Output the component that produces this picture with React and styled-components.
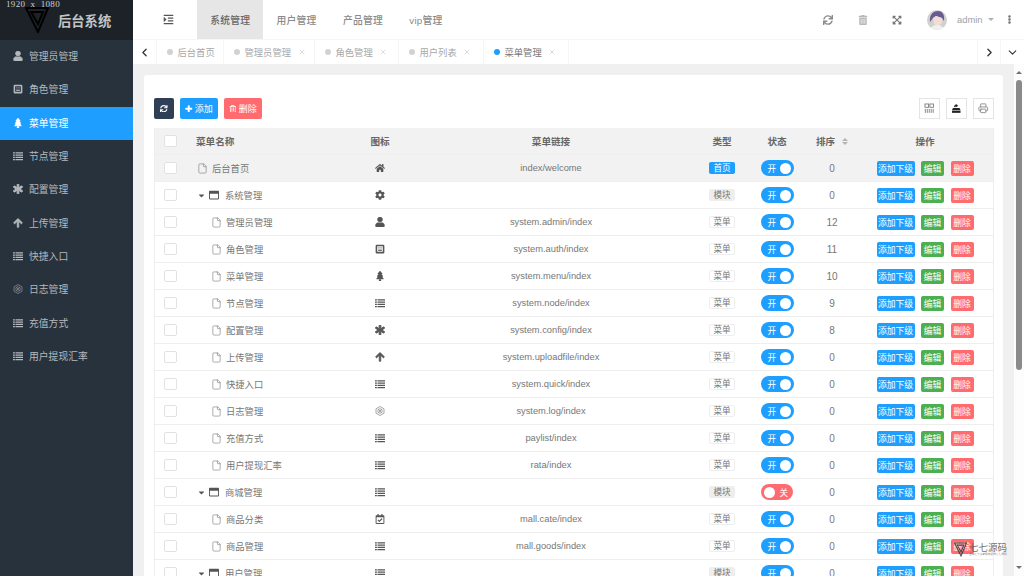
import React from 'react';
import styled, { createGlobalStyle } from 'styled-components';
import {
  FaUser, FaTree, FaAsterisk, FaArrowUp, FaHome, FaCog, FaSync, FaPlus, FaRegTrashAlt,
  FaTrashAlt, FaExpandArrowsAlt, FaRegWindowMaximize, FaCaretDown, FaRegCalendarCheck,
  FaEllipsisV, FaIndent,
} from 'react-icons/fa';
import { Printer, File, X, ChevronLeft, ChevronRight, ChevronDown } from 'lucide-react';

const FONT = '"Liberation Sans", "Noto Sans CJK SC", sans-serif';
const COLS = '31px 169px 50px 292px 50px 60px 50px 136px';

const Global = createGlobalStyle`
  html, body { margin: 0; padding: 0; height: 100%; overflow: hidden; background: #f0f0f0; }
  #root { height: 100%; }
  * { box-sizing: border-box; }
  body { font-family: ${FONT}; }
`;

const Shell = styled.div`
  display: grid;
  grid-template-columns: 133px 1fr;
  height: 100vh;
  overflow: hidden;
  position: relative;
`;

const Side = styled.aside`
  background: #28323d;
  display: flex;
  flex-direction: column;
`;

const Brand = styled.div`
  position: relative;
  height: 40px;
  background: #1c2228;
  display: flex;
  align-items: center;
  padding-left: 25px;
  gap: 9px;
  flex: none;
`;

const BrandTitle = styled.span`
  color: #c4c4c4;
  font-size: 13.3px;
  font-weight: 700;
`;

const Resolution = styled.span`
  position: absolute;
  left: 6px;
  top: -1px;
  font: 9px "Liberation Serif", serif;
  color: #cfcfcf;
  white-space: pre;
  line-height: 10px;
  letter-spacing: 0.35px;
`;

const NavItem = styled.div`
  height: 33.33px;
  display: flex;
  align-items: center;
  padding: 0 0 1px 13px;
  gap: 6px;
  flex: none;
  font-size: 9.8px;
  color: ${p => (p.$active ? '#fff' : '#b4b8bc')};
  background: ${p => (p.$active ? '#1e9fff' : 'transparent')};
  svg { width: 10px; height: 10px; flex: none; }
`;

const Main = styled.main`
  display: flex;
  flex-direction: column;
  min-width: 0;
  overflow: hidden;
`;

const Top = styled.header`
  height: 40px;
  background: #fff;
  border-bottom: 1px solid #f6f6f6;
  display: flex;
  align-items: stretch;
  flex: none;
`;

const Collapse = styled.div`
  width: 64px;
  padding-left: 6px;
  display: flex;
  align-items: center;
  justify-content: center;
  color: #555;
  svg { width: 11px; height: 11px; }
`;

const TopLink = styled.div`
  padding: 0 13.2px;
  display: flex;
  align-items: center;
  justify-content: center;
  font-size: 9.8px;
  font-weight: 500;
  letter-spacing: 0.2px;
  color: ${p => (p.$active ? '#666' : '#8a8a8a')};
  background: ${p => (p.$active ? '#e6e6e6' : 'transparent')};
`;

const TopRight = styled.div`
  margin-left: auto;
  display: flex;
  align-items: center;
  padding-right: 10.5px;
`;

const TopIcon = styled.span`
  width: 34.5px;
  display: flex;
  justify-content: center;
  color: ${p => p.$c || '#8a8a8a'};
  svg { width: 10px; height: 10px; }
`;

const Avatar = styled.svg`
  width: 20px;
  height: 20px;
  margin-left: 12.5px;
  border-radius: 50%;
  flex: none;
`;

const UserName = styled.span`
  font-size: 9.4px;
  color: #a2a2a2;
  margin-left: 10px;
`;

const Caret = styled.span`
  width: 0;
  height: 0;
  border: 3.5px solid transparent;
  border-top: 3.5px solid #b0b0b0;
  border-bottom: 0;
  margin: 0 11px 0 5px;
`;

const Dots = styled.span`
  color: #777;
  display: flex;
  svg { width: 9px; height: 9px; }
`;

const TabStrip = styled.nav`
  height: 24px;
  background: #fff;
  display: flex;
  flex: none;
`;

const TabArrow = styled.div`
  width: ${p => p.$w || 24}px;
  display: flex;
  align-items: center;
  justify-content: center;
  color: #333;
  border-left: ${p => (p.$left ? '1px solid #f6f6f6' : '0')};
  border-right: ${p => (p.$right ? '1px solid #f6f6f6' : '0')};
  svg { width: 13px; height: 13px; }
`;

const Tab = styled.div`
  width: ${p => p.$w}px;
  border-right: 1px solid #f6f6f6;
  display: flex;
  align-items: center;
  padding-left: 10px;
  font-size: 9.3px;
  color: ${p => (p.$active ? '#777' : '#a8a8a8')};
  white-space: nowrap;
`;

const Dot = styled.i`
  width: 6px;
  height: 6px;
  border-radius: 50%;
  background: ${p => (p.$active ? '#1e9fff' : '#d2d2d2')};
  margin-right: 4.5px;
  flex: none;
`;

const TabClose = styled.span`
  display: flex;
  margin-left: 6.5px;
  color: #bbb;
  svg { width: 8px; height: 8px; }
`;

const Tabs = styled.div`
  display: flex;
  flex: 1;
`;

const Body = styled.div`
  flex: 1;
  display: flex;
  min-height: 0;
`;

const Canvas = styled.div`
  flex: 1;
  padding: 11px 11px 0;
  overflow: hidden;
  background: #f0f0f0;
`;

const Card = styled.section`
  background: #fff;
  border-radius: 3px;
  padding: 23px 9px 0 10px;
  height: 600px;
`;

const Toolbar = styled.div`
  display: flex;
  align-items: center;
  height: 21px;
  margin-bottom: 9px;
  gap: 6px;
`;

const ToolBtn = styled.button`
  height: 21px;
  width: ${p => p.$w}px;
  padding: 0;
  border: 0;
  border-radius: 2px;
  background: ${p => p.$bg};
  color: #fff;
  font: 9px ${FONT};
  display: flex;
  align-items: center;
  justify-content: center;
  gap: 2px;
  svg { width: 7.5px; height: 7.5px; }
`;

const ToolRight = styled.div`
  margin-left: auto;
  display: flex;
  gap: 6px;
`;

const SquareBtn = styled.div`
  width: 21px;
  height: 21px;
  border: 1px solid #e4e4e4;
  display: flex;
  align-items: center;
  justify-content: center;
  color: ${p => p.$c || '#777'};
  svg { width: 10.5px; height: 10.5px; }
`;

const Row = styled.div`
  display: grid;
  grid-template-columns: ${COLS};
  height: 27px;
  align-items: center;
  border: 1px solid #eee;
  border-top: 0;
  background: ${p => (p.$shade ? '#f2f2f2' : '#fff')};
  font-size: 9.3px;
  color: #666;
`;

const HeadCell = styled.div`
  font-weight: 700;
  font-size: 9.6px;
  color: #666;
  padding-left: ${p => (p.$left ? '10px' : '0')};
  display: flex;
  justify-content: ${p => (p.$left ? 'flex-start' : 'center')};
  align-items: center;
  gap: 7px;
`;

const Center = styled.div`
  display: flex;
  justify-content: center;
  align-items: center;
`;

const Check = styled.span`
  width: 12.5px;
  height: 12.5px;
  background: #fff;
  border: 1px solid #e2e2e2;
  border-radius: 2px;
`;

const NameCell = styled.div`
  display: flex;
  align-items: center;
  padding-left: ${p => p.$indent}px;
  color: #777;
  white-space: nowrap;
`;

const FileGlyph = styled.span`
  display: flex;
  color: #888;
  margin-right: 4px;
  svg { width: 11px; height: 11px; }
`;

const CaretGlyph = styled.span`
  display: flex;
  color: #555;
  margin-right: 3px;
  svg { width: 9px; height: 9px; }
`;

const WinGlyph = styled.span`
  display: flex;
  color: #555;
  margin-right: 6px;
  svg { width: 10px; height: 10px; }
`;

const IconCell = styled.div`
  display: flex;
  justify-content: center;
  color: #555;
  svg { width: 10px; height: 10px; }
`;

const LinkCell = styled.div`
  text-align: center;
  font-size: 9.3px;
  color: #777;
`;

const SortCell = styled.div`
  text-align: center;
  font-size: 10px;
  color: #777;
`;

const TagBox = styled.span`
  font-size: 8.6px;
  line-height: 11px;
  height: 12px;
  padding: 0 3px;
  border-radius: 2px;
  background: ${p => ({ home: '#1e9fff', mod: '#eeeeee', menu: '#fff' }[p.$k])};
  color: ${p => (p.$k === 'home' ? '#fff' : '#777')};
  border: 1px solid ${p => (p.$k === 'menu' ? '#eeeeee' : 'transparent')};
`;

const Switch = styled.span`
  width: ${p => (p.$on ? 33 : 32)}px;
  height: 16px;
  border-radius: 8px;
  background: ${p => (p.$on ? '#1e9fff' : '#ff6b6f')};
  color: #fff;
  font-size: 8.6px;
  display: flex;
  flex-direction: ${p => (p.$on ? 'row' : 'row-reverse')};
  align-items: center;
  justify-content: space-between;
  padding: ${p => (p.$on ? '0 3px 0 7px' : '0 5px 0 3px')};
`;

const Knob = styled.i`
  width: 11px;
  height: 11px;
  border-radius: 50%;
  background: #fff;
`;

const Actions = styled.div`
  display: flex;
  justify-content: center;
  gap: 6.5px;
`;

const ActBtn = styled.span`
  width: ${p => p.$w}px;
  height: 15px;
  border-radius: 2px;
  background: ${p => p.$bg};
  color: #fff;
  font-size: 8.8px;
  display: flex;
  align-items: center;
  justify-content: center;
`;

const Track = styled.div`
  width: 10px;
  flex: none;
  background: #fdfdfd;
  display: flex;
  flex-direction: column;
  align-items: center;
  padding: 7px 0;
`;

const ArrowUp = styled.i`
  width: 0; height: 0;
  border: 3px solid transparent;
  border-bottom: 3px solid #707070;
  border-top: 0;
`;

const ArrowDown = styled.i`
  width: 0; height: 0;
  border: 3px solid transparent;
  border-top: 3px solid #707070;
  border-bottom: 0;
  margin-top: auto;
`;

const Thumb = styled.div`
  width: 6px;
  height: 290px;
  margin-top: 6px;
  background: #8a8a8a;
  border-radius: 3px;
`;

const Watermark = styled.div`
  position: absolute;
  left: 954px;
  top: 542px;
  display: flex;
  align-items: center;
  gap: 2px;
  opacity: .85;
  svg { width: 13px; height: 15px; }
`;

const WaterText = styled.div`
  display: flex;
  flex-direction: column;
`;

const WaterMain = styled.span`
  font-size: 9.5px;
  line-height: 11px;
  color: #555;
`;

const WaterSmall = styled.span`
  font-size: 2.7px;
  line-height: 4px;
  color: #666;
  white-space: nowrap;
`;

const SortArrows = styled.span`
  display: inline-flex;
  flex-direction: column;
  gap: 1px;
  i { width: 0; height: 0; border: 3px solid transparent; }
  i:first-child { border-bottom: 3px solid #b4b4b4; border-top: 0; }
  i:last-child { border-top: 3px solid #b4b4b4; border-bottom: 0; }
`;

const BoldUser = styled(FaUser)`stroke: currentColor; stroke-width: 30px;`;
const BoldAsterisk = styled(FaAsterisk)`stroke: currentColor; stroke-width: 50px;`;
const BoldArrow = styled(FaArrowUp)`stroke: currentColor; stroke-width: 40px;`;
const BoldPlus = styled(FaPlus)`stroke: currentColor; stroke-width: 40px;`;

const Triangles = ({ color = '#000' }) => (
  <svg viewBox="0 0 24 26" width="24" height="26" fill="none" stroke={color} strokeWidth="2">
    <path d="M1 1 H23 L13 25 Z" />
    <path d="M6 5 H18 L13 17 Z" />
  </svg>
);

const RoleIcon = () => (
  <svg viewBox="0 0 16 16" fill="currentColor">
    <path fillRule="evenodd" d="M3 1h10a2 2 0 0 1 2 2v10a2 2 0 0 1-2 2H3a2 2 0 0 1-2-2V3a2 2 0 0 1 2-2zm.5 2.5v9h9v-9z" />
    <path d="M5 9h6v2H5z" />
    <path d="M5.5 5h1.6v2H5.5zM8.9 5h1.6v2H8.9z" />
  </svg>
);

const LogIcon = () => (
  <svg viewBox="0 0 16 16" fill="none" stroke="currentColor" strokeWidth="1.1" opacity=".75">
    <path d="M8 .8l6.4 3.6v7.2L8 15.2l-6.4-3.6V4.4z" />
    <circle cx="8" cy="8" r="3.6" />
    <path d="M5.4 5.4l5.2 5.2M10.6 5.4l-5.2 5.2" />
  </svg>
);

const ListIcon = () => (
  <svg viewBox="0 0 16 14" fill="currentColor">
    <path d="M0 1h3v2H0zM4 1h12v2H4zM0 4.6h3v2H0zM4 4.6h12v2H4zM0 8.2h3v2H0zM4 8.2h12v2H4zM0 11.8h3v2H0zM4 11.8h12v2H4z" />
  </svg>
);

const ColsIcon = () => (
  <svg viewBox="0 0 16 16" fill="none" stroke="currentColor" strokeWidth="1.3">
    <rect x="1.5" y="1.5" width="5.5" height="5" />
    <rect x="9" y="1.5" width="5.5" height="5" />
    <path d="M2 9v6M5 9v6M8 9v6M11 9v6M14 9v6" />
  </svg>
);

const ExportIcon = () => (
  <svg viewBox="0 0 16 16" fill="currentColor">
    <path d="M7 1l4 3-4 3V5.2C5.5 5.2 4.8 6 4.5 7.5 4.2 5 5 3.6 7 3.2z" />
    <path d="M3 7.5h10l1.5 3H1.5z" />
    <path d="M1.5 11.5h13V15h-13z" />
  </svg>
);

const MENU = [
  { icon: BoldUser, label: '管理员管理' },
  { icon: RoleIcon, label: '角色管理' },
  { icon: FaTree, label: '菜单管理', active: true },
  { icon: ListIcon, label: '节点管理' },
  { icon: BoldAsterisk, label: '配置管理' },
  { icon: BoldArrow, label: '上传管理' },
  { icon: ListIcon, label: '快捷入口' },
  { icon: LogIcon, label: '日志管理' },
  { icon: ListIcon, label: '充值方式' },
  { icon: ListIcon, label: '用户提现汇率' },
];

const TABS = [
  { label: '后台首页', w: 67 },
  { label: '管理员管理', w: 91, close: true },
  { label: '角色管理', w: 84, close: true },
  { label: '用户列表', w: 85, close: true },
  { label: '菜单管理', w: 85, close: true, active: true },
];

const ROWS = [
  { name: '后台首页', level: 0, icon: FaHome, link: 'index/welcome', tag: 'home', sort: 0, shade: true },
  { name: '系统管理', level: 1, icon: FaCog, link: '', tag: 'mod', sort: 0 },
  { name: '管理员管理', level: 2, icon: BoldUser, link: 'system.admin/index', tag: 'menu', sort: 12 },
  { name: '角色管理', level: 2, icon: RoleIcon, link: 'system.auth/index', tag: 'menu', sort: 11 },
  { name: '菜单管理', level: 2, icon: FaTree, link: 'system.menu/index', tag: 'menu', sort: 10 },
  { name: '节点管理', level: 2, icon: ListIcon, link: 'system.node/index', tag: 'menu', sort: 9 },
  { name: '配置管理', level: 2, icon: BoldAsterisk, link: 'system.config/index', tag: 'menu', sort: 8 },
  { name: '上传管理', level: 2, icon: BoldArrow, link: 'system.uploadfile/index', tag: 'menu', sort: 0 },
  { name: '快捷入口', level: 2, icon: ListIcon, link: 'system.quick/index', tag: 'menu', sort: 0 },
  { name: '日志管理', level: 2, icon: LogIcon, link: 'system.log/index', tag: 'menu', sort: 0 },
  { name: '充值方式', level: 2, icon: ListIcon, link: 'paylist/index', tag: 'menu', sort: 0 },
  { name: '用户提现汇率', level: 2, icon: ListIcon, link: 'rata/index', tag: 'menu', sort: 0 },
  { name: '商城管理', level: 1, icon: ListIcon, link: '', tag: 'mod', sort: 0, off: true },
  { name: '商品分类', level: 2, icon: FaRegCalendarCheck, link: 'mall.cate/index', tag: 'menu', sort: 0 },
  { name: '商品管理', level: 2, icon: ListIcon, link: 'mall.goods/index', tag: 'menu', sort: 0 },
  { name: '用户管理', level: 1, icon: ListIcon, link: '', tag: 'mod', sort: 0 },
];

const TAG_TEXT = { home: '首页', mod: '模块', menu: '菜单' };

const RowName = ({ level, name }) => {
  if (level === 0) return <NameCell $indent={11}><FileGlyph><File strokeWidth={1.5} /></FileGlyph>{name}</NameCell>;
  if (level === 1) return (
    <NameCell $indent={11}>
      <CaretGlyph><FaCaretDown /></CaretGlyph>
      <WinGlyph><FaRegWindowMaximize /></WinGlyph>{name}
    </NameCell>
  );
  return <NameCell $indent={25}><FileGlyph><File strokeWidth={1.5} /></FileGlyph>{name}</NameCell>;
};

export default function App() {
  return (
    <Shell>
      <Global />
      <Side>
        <Brand>
          <Resolution>{'1920  x  1080'}</Resolution>
          <Triangles />
          <BrandTitle>后台系统</BrandTitle>
        </Brand>
        {MENU.map(m => (
          <NavItem key={m.label} $active={m.active}><m.icon />{m.label}</NavItem>
        ))}
      </Side>
      <Main>
        <Top>
          <Collapse><FaIndent /></Collapse>
          <TopLink $active>系统管理</TopLink>
          <TopLink>用户管理</TopLink>
          <TopLink>产品管理</TopLink>
          <TopLink>vip管理</TopLink>
          <TopRight>
            <TopIcon><FaSync /></TopIcon>
            <TopIcon $c="#b8b8b8"><FaTrashAlt /></TopIcon>
            <TopIcon $c="#777"><FaExpandArrowsAlt /></TopIcon>
            <Avatar viewBox="0 0 20 20">
              <rect width="20" height="20" fill="#cfd2cc" />
              <path d="M3 12C2 4 7 1 11 1s7 3 6 10l-2-3-6-2-3 2z" fill="#6a5a92" />
              <path d="M6 8l3-2 6 2v5l-4 3-4-2z" fill="#f2dcd4" />
              <path d="M3 20c1-4 4-5 7-5s6 1 7 5z" fill="#f0f0f2" />
            </Avatar>
            <UserName>admin</UserName>
            <Caret />
            <Dots><FaEllipsisV /></Dots>
          </TopRight>
        </Top>
        <TabStrip>
          <TabArrow $right><ChevronLeft strokeWidth={2.4} /></TabArrow>
          <Tabs>
            {TABS.map(t => (
              <Tab key={t.label} $w={t.w} $active={t.active}>
                <Dot $active={t.active} />
                {t.label}
                {t.close && <TabClose><X strokeWidth={1.5} /></TabClose>}
              </Tab>
            ))}
          </Tabs>
          <TabArrow $left $w={23}><ChevronRight strokeWidth={2.4} /></TabArrow>
          <TabArrow $left><ChevronDown strokeWidth={2} /></TabArrow>
        </TabStrip>
        <Body>
          <Canvas>
            <Card>
              <Toolbar>
                <ToolBtn $w={20} $bg="#2f4056"><FaSync /></ToolBtn>
                <ToolBtn $w={38} $bg="#1e9fff"><BoldPlus />添加</ToolBtn>
                <ToolBtn $w={38} $bg="#ff6b6f"><FaRegTrashAlt />删除</ToolBtn>
                <ToolRight>
                  <SquareBtn><ColsIcon /></SquareBtn>
                  <SquareBtn $c="#222"><ExportIcon /></SquareBtn>
                  <SquareBtn $c="#888"><Printer /></SquareBtn>
                </ToolRight>
              </Toolbar>
              <div>
                <Row $shade>
                  <Center><Check /></Center>
                  <HeadCell $left>菜单名称</HeadCell>
                  <HeadCell>图标</HeadCell>
                  <HeadCell>菜单链接</HeadCell>
                  <HeadCell>类型</HeadCell>
                  <HeadCell>状态</HeadCell>
                  <HeadCell>排序<SortArrows><i /><i /></SortArrows></HeadCell>
                  <HeadCell>操作</HeadCell>
                </Row>
                {ROWS.map(r => (
                  <Row key={r.name + r.link} $shade={r.shade}>
                    <Center><Check /></Center>
                    <RowName level={r.level} name={r.name} />
                    <IconCell><r.icon /></IconCell>
                    <LinkCell>{r.link}</LinkCell>
                    <Center><TagBox $k={r.tag}>{TAG_TEXT[r.tag]}</TagBox></Center>
                    <Center>
                      <Switch $on={!r.off}>{r.off ? '关' : '开'}<Knob /></Switch>
                    </Center>
                    <SortCell>{r.sort}</SortCell>
                    <Actions>
                      <ActBtn $w={38} $bg="#1e9fff">添加下级</ActBtn>
                      <ActBtn $w={23} $bg="#4caf50">编辑</ActBtn>
                      <ActBtn $w={23} $bg="#ff6b6f">删除</ActBtn>
                    </Actions>
                  </Row>
                ))}
              </div>
            </Card>
          </Canvas>
          <Track>
            <ArrowUp />
            <Thumb />
            <ArrowDown />
          </Track>
        </Body>
      </Main>
      <Watermark>
        <Triangles color="#333" />
        <WaterText>
          <WaterMain>七七源码</WaterMain>
          <WaterSmall>全球七千多家服务提供七七源码</WaterSmall>
        </WaterText>
      </Watermark>
    </Shell>
  );
}
